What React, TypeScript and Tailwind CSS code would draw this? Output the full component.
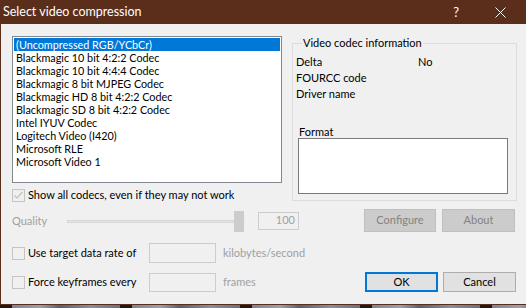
import React from "react";

const codecs = [
  "(Uncompressed RGB/YCbCr)",
  "Blackmagic 10 bit 4:2:2 Codec",
  "Blackmagic 10 bit 4:4:4 Codec",
  "Blackmagic 8 bit MJPEG Codec",
  "Blackmagic HD 8 bit 4:2:2 Codec",
  "Blackmagic SD 8 bit 4:2:2 Codec",
  "Intel IYUV Codec",
  "Logitech Video (I420)",
  "Microsoft RLE",
  "Microsoft Video 1",
];

function Check({ checked }: { checked?: boolean }) {
  return (
    <div className="w-[13px] h-[13px] border border-[#c4c4c4] bg-[#f0f0f0] flex items-center justify-center shrink-0">
      {checked && (
        <svg width="11" height="11" viewBox="0 0 11 11">
          <path d="M1.5 5.5 L4 8 L9.5 2" stroke="#bfbfbf" strokeWidth="1.2" fill="none" />
        </svg>
      )}
    </div>
  );
}

export default function App() {
  return (
    <div
      className="w-[526px] h-[308px] overflow-hidden bg-[#5d6470] flex flex-col text-[11px] text-black"
      style={{ fontFamily: 'Lato, "Noto Sans", sans-serif' }}
    >
      <div className="h-[305px] shrink-0 flex flex-col bg-[#5b2e1c] pl-[1px] pb-[1px]">
        {/* title bar */}
        <div className="h-[24px] shrink-0 flex items-center text-white">
          <span className="ml-[2px] text-[12.5px] leading-none whitespace-nowrap">Select video compression</span>
          <span className="ml-auto mr-[36px] text-[13px] leading-none">?</span>
          <svg width="11" height="11" viewBox="0 0 11 11" className="mr-[20px]">
            <path d="M0.5 0.5 L10.5 10.5 M10.5 0.5 L0.5 10.5" stroke="white" strokeWidth="1" />
          </svg>
        </div>
        {/* client */}
        <div className="flex-1 bg-[#f0f0f0] pl-[11px] flex flex-col">
          {/* section A */}
          <div className="flex items-start h-[179px]">
            <div className="w-[270px] flex flex-col">
              <div className="mt-[12px] h-[147px] border border-[#828790] bg-white p-[1px] text-[10.8px]">
                {codecs.map((c, i) => (
                  <div
                    key={c}
                    className={
                      "h-[13px] leading-[13px] pl-[2px] whitespace-nowrap " +
                      (i === 0 ? "bg-[#0078d7] text-white" : "")
                    }
                  >
                    {c}
                  </div>
                ))}
              </div>
              <div className="mt-[4px] h-[16px] flex items-center">
                <Check checked />
                <span className="ml-[3px] leading-[16px] whitespace-nowrap">Show all codecs, even if they may not work</span>
              </div>
            </div>
            <fieldset className="ml-[10px] mt-[11px] w-[225px] h-[166px] border border-[#dcdcdc] px-[3px]">
              <legend className="ml-[6px] px-[1px] leading-[16px]">Video codec information</legend>
              <div className="mt-[3px] flex flex-col leading-[16px]">
                <div className="flex">
                  <span className="w-[122px]">Delta</span>
                  <span>No</span>
                </div>
                <div>FOURCC code</div>
                <div>Driver name</div>
              </div>
              <div className="mt-[23px] ml-[3px] leading-[13px] h-[13px]">Format</div>
              <div className="ml-[2px] w-[210px] h-[56px] border border-[#7a7a7a] bg-white" />
            </fieldset>
          </div>
          {/* quality row */}
          <div className="mt-[6px] h-[23px] flex items-center">
            <span className="w-[55px] text-[#a0a0a0] mt-[2px]">Quality</span>
            <div className="w-[178px] h-[21px] flex items-center mt-[2px]">
              <div className="w-[167px] h-[3px] bg-[#e7e7e7] border border-[#d6d6d6]" />
              <div className="w-[10px] h-[21px] bg-[#cccccc]" />
              <div className="w-[1px] h-[3px] bg-[#e7e7e7]" />
            </div>
            <div className="ml-[13px] w-[41px] h-[18px] border border-[#cccccc] flex items-center justify-end pr-[3px] text-[#a0a0a0]">
              100
            </div>
            <div className="ml-[65px] w-[72px] h-[23px] bg-[#cccccc] border border-[#bfbfbf] flex items-center justify-center text-[#838383]">
              Configure
            </div>
            <div className="ml-[6px] w-[73px] h-[23px] bg-[#cccccc] border border-[#bfbfbf] flex items-center justify-center text-[#838383]">
              About
            </div>
          </div>
          {/* data rate row */}
          <div className="mt-[11px] h-[20px] flex items-center">
            <Check />
            <span className="ml-[3px] w-[120px] whitespace-nowrap">Use target data rate of</span>
            <div className="ml-[1px] w-[67px] h-[20px] border border-[#cccccc]" />
            <span className="ml-[7px] text-[#a0a0a0] whitespace-nowrap">kilobytes/second</span>
          </div>
          {/* keyframes row */}
          <div className="mt-[9px] h-[20px] flex items-center">
            <Check />
            <span className="ml-[3px] w-[120px] whitespace-nowrap">Force keyframes every</span>
            <div className="ml-[1px] w-[67px] h-[19px] border border-[#cccccc]" />
            <span className="ml-[7px] w-[142px] text-[#a0a0a0]">frames</span>
            <div className="w-[73px] h-[20px] bg-[#e1e1e1] border-2 border-[#0078d7] flex items-center justify-center">
              OK
            </div>
            <div className="ml-[5px] w-[73px] h-[20px] bg-[#e1e1e1] border border-[#adadad] flex items-center justify-center">
              Cancel
            </div>
          </div>
        </div>
      </div>
      <div
        className="flex-1"
        style={{
          background:
            "repeating-linear-gradient(90deg,#1a1a1a 0px,#1a1a1a 12px,#7c8496 12px,#9aa2b0 40px,#5a6070 60px,#8890a0 90px,#6a7080 120px)",
        }}
      />
    </div>
  );
}
